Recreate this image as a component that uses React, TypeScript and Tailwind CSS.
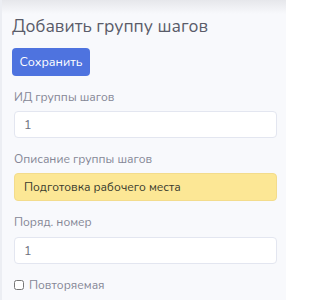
import React, { useState } from 'react';

const font = { fontFamily: '"Nunito", "Noto Sans", "Liberation Sans", sans-serif' };

export default function App() {
  const [repeatable, setRepeatable] = useState(false);

  return (
    <div className="relative min-h-[300px] w-[286px] bg-[#f8f9fc] overflow-hidden" style={font}>
      <div className="pointer-events-none absolute inset-x-0 top-0 h-[14px] bg-gradient-to-b from-[#e6e7eb] to-[#f8f9fc]" />
      <div className="pointer-events-none absolute left-0 top-0 bottom-0 w-[2px] bg-[#eceef3]" />
      <div className="relative flex flex-col pl-[12px] pr-[9px] pt-[14px]">
        <h1 className="text-[17.5px] leading-[25px] text-[#5a5c69] font-normal">Добавить группу шагов</h1>

        <div className="mt-[9px]">
          <button className="h-[28px] w-[78px] rounded-[4px] bg-[#4e73df] text-[12.5px] text-white">Сохранить</button>
        </div>

        <form className="mt-[13px] flex flex-col pl-[2px]" onSubmit={(e) => e.preventDefault()}>
          <label className="text-[12px] leading-[16px] text-[#858796]">ИД группы шагов</label>
          <input
            defaultValue="1"
            className="mt-[6px] h-[27px] w-full rounded-[4px] border border-[#e3e6f0] bg-white px-[9px] text-[12.5px] text-[#6e707e] outline-none"
          />

          <label className="mt-[13px] text-[12px] leading-[16px] text-[#858796]">Описание группы шагов</label>
          <input
            defaultValue="Подготовка рабочего места"
            className="mt-[6px] h-[28px] w-full rounded-[4px] border border-[#f3dc8c] bg-[#fce795] px-[9px] text-[12px] text-[#3a3b2e] outline-none"
          />

          <label className="mt-[13px] text-[12px] leading-[16px] text-[#858796]">Поряд. номер</label>
          <input
            defaultValue="1"
            className="mt-[7px] h-[27px] w-full rounded-[4px] border border-[#e3e6f0] bg-white px-[9px] text-[12.5px] text-[#6e707e] outline-none"
          />

          <label className="mt-[13px] flex items-center gap-[5px] text-[12px] leading-[16px] text-[#858796]">
            <input
              type="checkbox"
              checked={repeatable}
              onChange={(e) => setRepeatable(e.target.checked)}
              className="h-[10px] w-[10px] m-0"
            />
            Повторяемая
          </label>
        </form>
      </div>
    </div>
  );
}
